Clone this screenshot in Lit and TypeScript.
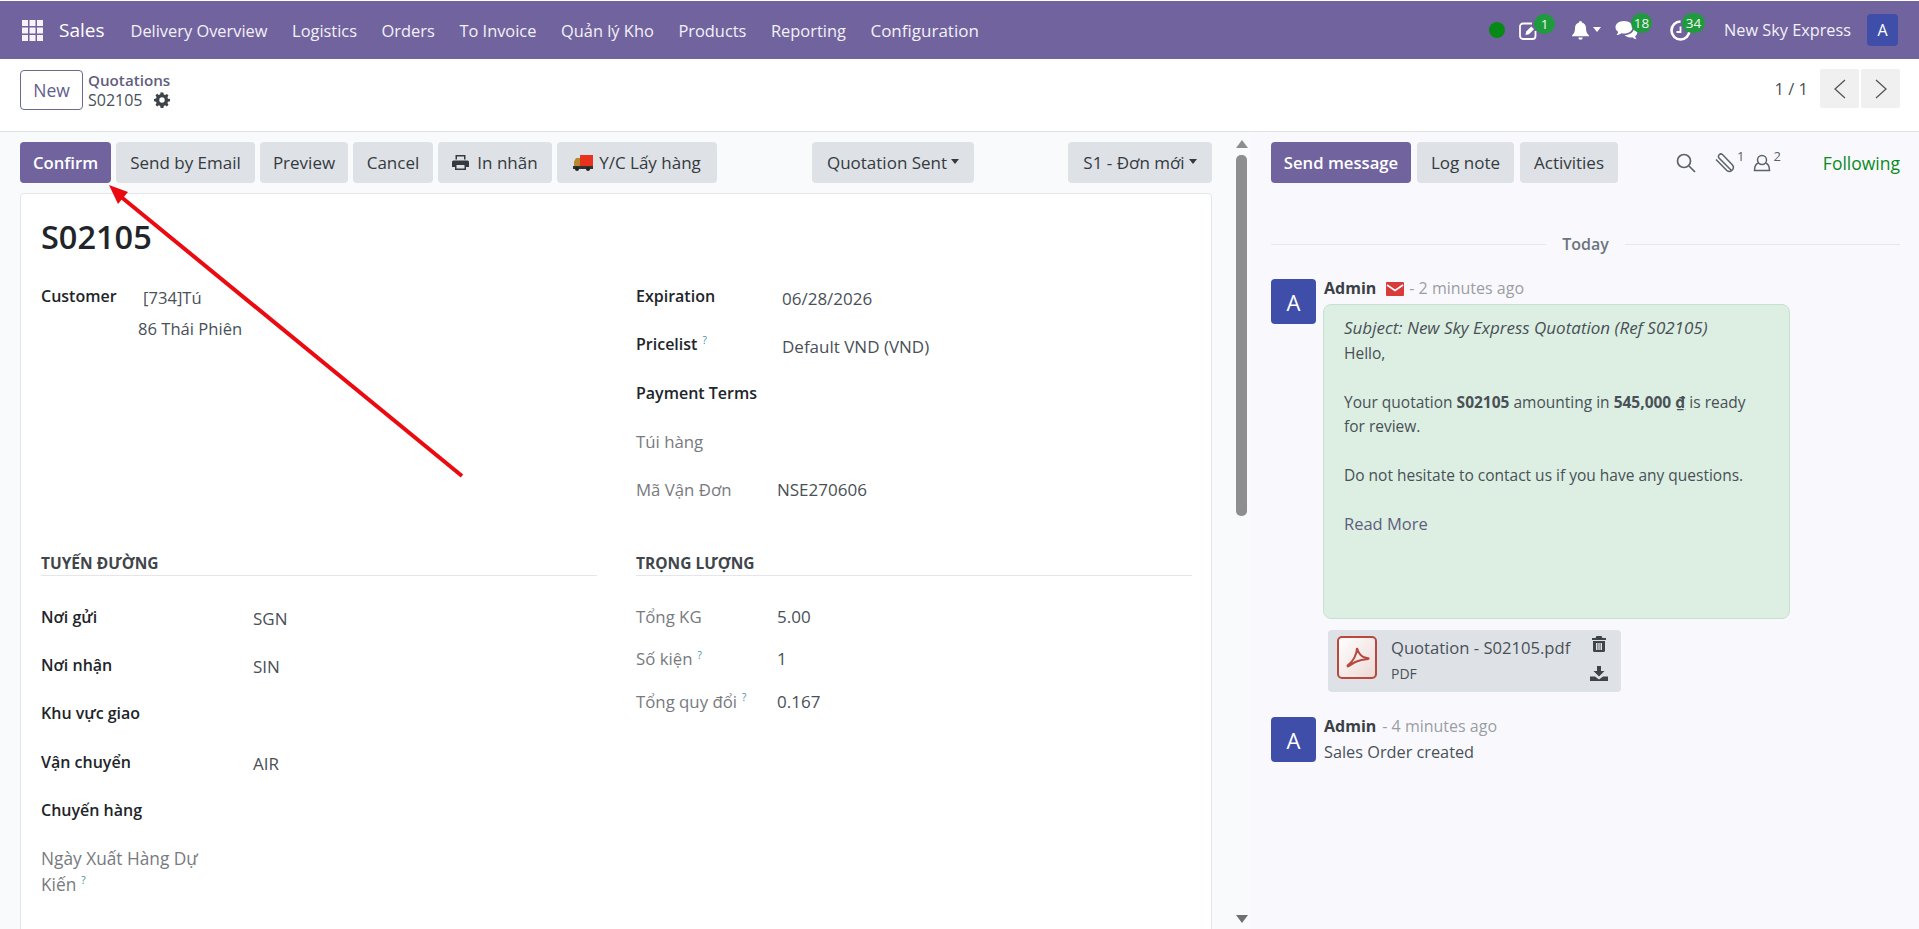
import { LitElement, html, css, svg } from "lit";
import { customElement } from "lit/decorators.js";

const gear = svg`<path fill="currentColor" d="M8 0.5l1.4 0 .4 2 1.4.6 1.7-1.1 1.6 1.6-1.1 1.7.6 1.4 2 .4v2.2l-2 .4-.6 1.4 1.1 1.7-1.6 1.6-1.7-1.1-1.4.6-.4 2H6.600l-.4-2-1.4-.6-1.7 1.1-1.6-1.600 1.1-1.700-.6-1.400-2-.4V6.900l2-.4.6-1.400-1.100-1.700 1.600-1.600 1.700 1.100 1.400-.6.4-2zM8 5.300a2.700 2.700 0 1 0 0 5.400 2.700 2.700 0 0 0 0-5.400z"/>`;

@customElement("app-root")
export class AppRoot extends LitElement {
  static styles = css`
    :host {
      display: block;
      position: relative;
      height: 929px;
      overflow: hidden;
      background: #fff;
      font-family: "Open Sans", "Noto Sans", sans-serif;
      font-size: 16px;
      color: #495057;
    }
    svg {
      display: block;
    }
    .nav {
      display: flex;
      align-items: center;
      height: 58px;
      margin-top: 1px;
      padding: 0 21px 0 22px;
      background: #71639e;
      color: #fff;
    }
    .apps {
      width: 21px;
      height: 21px;
      margin-right: 16px;
      color: #f6f4fa;
    }
    .brand {
      font-size: 19px;
      margin-right: 26px;
    }
    .nav a {
      margin-right: 24.600px;
      color: #f3f1f8;
      font-size: 16.400px;
    }
    .nav a:last-of-type {
      font-size: 17px;
    }
    .sys {
      margin-left: auto;
      display: flex;
      align-items: center;
    }
    .dot {
      width: 16px;
      height: 16px;
      border-radius: 50%;
      background: #078a15;
      margin-right: 14px;
    }
    .sysicon {
      position: relative;
      color: #fff;
    }
    .badge {
      position: absolute;
      top: -7px;
      min-width: 21px;
      height: 20px;
      box-sizing: border-box;
      border-radius: 10px;
      background: #1e9b3d;
      color: #f2f8ee;
      font-size: 13.500px;
      font-weight: 500;
      line-height: 20px;
      text-align: center;
    }
    .user {
      margin-left: 33px;
      color: #f3f1f8;
      font-size: 16.300px;
    }
    .avatar-top {
      width: 31px;
      height: 32px;
      margin-left: 16px;
      border-radius: 4px;
      background: #3f4ea8;
      color: #fff;
      display: flex;
      align-items: center;
      justify-content: center;
    }
    .cp {
      display: flex;
      align-items: center;
      height: 72px;
      padding: 0 19px 0 20px;
      border-bottom: 1px solid #dee2e6;
    }
    .new {
      box-sizing: border-box;
      width: 63px;
      height: 40px;
      border: 1px solid #6b6a92;
      border-radius: 4px;
      color: #5f5e8c;
      font-size: 17.500px;
      display: flex;
      align-items: center;
      justify-content: center;
      margin-right: 5px;
      margin-bottom: 10px;
    }
    .crumb {
      line-height: 20px;
      margin-bottom: 11px;
    }
    .crumb .top {
      font-size: 15.200px;
      font-weight: 600;
      color: #5f5e7e;
    }
    .crumb .cur {
      display: flex;
      align-items: center;
      gap: 11px;
    }
    .gear {
      width: 16px;
      height: 16px;
      color: #3f444a;
    }
    .pager {
      margin-left: auto;
      display: flex;
      align-items: center;
      margin-bottom: 13px;
    }
    .pager span {
      margin-right: 10px;
      font-size: 16.500px;
    }
    .pager b {
      display: flex;
      align-items: center;
      justify-content: center;
      width: 39px;
      height: 39px;
      margin-left: 2px;
      background: #f0f0f0;
      border-radius: 2px;
      color: #555;
    }
    .main {
      display: flex;
      height: 797px;
      background: #f9fafc;
    }
    .formpane {
      width: 1192px;
      padding: 10px 0 0 20px;
      flex: none;
    }
    .bar {
      display: flex;
      align-items: center;
      height: 41px;
      gap: 5px;
    }
    .btn {
      display: flex;
      align-items: center;
      justify-content: center;
      height: 41px;
      box-sizing: border-box;
      border-radius: 4px;
      background: #dee2e6;
      color: #343a40;
      font-size: 17px;
      font-weight: 500;
      white-space: nowrap;
      flex: none;
    }
    .primary {
      background: #71639e;
      color: #fff;
      font-size: 16.700px;
      font-weight: 600;
    }
    .caret {
      display: inline-block;
      margin-left: 4px;
      border-top: 5px solid currentColor;
      border-left: 4.500px solid transparent;
      border-right: 4.500px solid transparent;
      transform: translateY(-1px);
    }
    .scroll {
      width: 39px;
      flex: none;
      display: flex;
      flex-direction: column;
      align-items: center;
      padding: 8px 0 0 20px;
      box-sizing: border-box;
      position: relative;
    }
    .arrow-up {
      border-bottom: 8px solid #8e8e8e;
      border-left: 6px solid transparent;
      border-right: 6px solid transparent;
    }
    .thumb {
      width: 11px;
      height: 361px;
      margin-top: 7px;
      border-radius: 5px;
      background: #8e8e8e;
    }
    .arrow-down {
      position: absolute;
      top: 783px;
      border-top: 8px solid #6f6f6f;
      border-left: 6px solid transparent;
      border-right: 6px solid transparent;
    }
    .sheet {
      box-sizing: border-box;
      margin-top: 10px;
      height: 800px;
      border: 1px solid #e4e6ea;
      border-radius: 4px;
      background: #fff;
      padding: 21px 19px 0 20px;
    }
    h1 {
      margin: 0 0 13px;
      height: 44px;
      font-size: 32.500px;
      line-height: 44px;
      font-weight: 600;
      color: #212529;
    }
    .cols {
      display: grid;
      grid-template-columns: 556px 556px;
      column-gap: 39px;
    }
    .row {
      display: grid;
      align-items: center;
      height: 48.300px;
      white-space: nowrap;
    }
    .l {
      grid-template-columns: 212px 1fr;
    }
    .r {
      grid-template-columns: 146px 1fr;
    }
    .r2 {
      grid-template-columns: 141px 1fr;
    }
    .tight {
      height: 42.300px;
    }
    .lab {
      font-weight: 600;
      color: #212529;
    }
    .muted {
      font-size: 16.800px;
      font-weight: 500;
      color: #777a7e;
    }
    .val {
      font-size: 17px;
      transform: translateY(2px);
    }
    .r2 .val {
      transform: none;
    }
    .lab sup,
    .muted sup {
      font-size: 10px;
      font-weight: 500;
      color: #3d8ea5;
      margin-left: 5px;
      line-height: 0;
    }
    .cust {
      display: grid;
      grid-template-columns: 97px 1fr;
      align-items: start;
      padding-top: 10px;
      font-size: 16.600px;
      line-height: 31px;
    }
    .cust .lab {
      font-size: 16px;
      line-height: 28px;
    }
    .cust .name {
      padding-left: 5px;
    }
    .sect {
      height: 26px;
      margin-top: 36px;
      margin-bottom: 16px;
      border-bottom: 1px solid #e4e6ea;
      font-size: 15.500px;
      font-weight: 700;
      color: #40464c;
      line-height: 28px;
    }
    .r-sect {
      margin-bottom: 19px;
    }
    .two {
      height: 60px;
      align-items: start;
      padding-top: 12px;
    }
    .two .muted {
      white-space: normal;
      font-size: 17.300px;
      line-height: 26px;
      width: 172px;
    }
    .chatter {
      flex: 1;
      padding: 10px 19px 0 20px;
      background: #f9f9fd;
    }
    .tools {
      display: flex;
      align-items: center;
      gap: 5px;
      height: 41px;
    }
    .ic {
      color: #5c6268;
    }
    .sups {
      margin-left: auto;
      display: flex;
      align-items: center;
    }
    .sups sup {
      font-size: 13px;
      line-height: 0;
      margin-left: 2px;
      transform: translateY(-7px);
    }
    .follow {
      margin-left: 37px;
      color: #0a8a1e;
      font-size: 17.500px;
      font-weight: 500;
    }
    .today {
      display: flex;
      align-items: center;
      gap: 16px;
      margin-top: 50px;
      height: 22px;
      font-weight: 600;
      color: #6c757d;
    }
    .today i {
      flex: 1;
      height: 1px;
      background: #e6e8ec;
    }
    .msg {
      display: flex;
      gap: 8px;
    }
    .first {
      margin-top: 24px;
    }
    .second {
      margin-top: 25px;
    }
    .ava {
      width: 45px;
      height: 45px;
      flex: none;
      border-radius: 4px;
      background: #3f4ea8;
      color: #fff;
      font-size: 22px;
      display: flex;
      align-items: center;
      justify-content: center;
    }
    .head {
      display: flex;
      align-items: center;
      height: 19px;
      line-height: 19px;
      white-space: nowrap;
    }
    .head strong {
      font-weight: 700;
      color: #3a4046;
    }
    .head em {
      font-style: normal;
      color: #9a9ea3;
      font-size: 16px;
      margin-left: 6px;
    }
    .mail {
      margin-left: 10px;
      margin-right: -1px;
    }
    .bubble {
      box-sizing: border-box;
      width: 467px;
      height: 315px;
      margin-top: 6px;
      margin-left: -1px;
      padding: 11px 30px 0 20px;
      background: #dcefe2;
      border: 1px solid #c6e2cf;
      border-radius: 8px;
      font-size: 15.500px;
      line-height: 24.500px;
      color: #495057;
    }
    .bubble p {
      margin: 0 0 24.500px;
    }
    .subj {
      font-style: italic;
      font-size: 17px;
      white-space: nowrap;
      color: #495057;
    }
    .bubble b {
      font-weight: 700;
    }
    .bubble u {
      font-weight: 700;
    }
    .more {
      font-size: 16.500px;
      color: #5f5e7e;
    }
    .att {
      display: flex;
      box-sizing: border-box;
      width: 293px;
      height: 62px;
      margin: 11px 0 0 4px;
      padding: 6px 13px 0 9px;
      border-radius: 4px;
      background: #dee2e6;
    }
    .att .nm {
      margin-left: 14px;
      font-size: 16.600px;
      line-height: 26px;
      margin-top: -1px;
      white-space: nowrap;
      flex: 1;
    }
    .att small {
      display: block;
      font-size: 14px;
      line-height: 26px;
    }
    .att .acts {
      display: flex;
      flex-direction: column;
      align-items: center;
      gap: 14px;
      color: #3f444a;
    }
    .sales {
      margin-top: 5px;
      font-size: 16.300px;
    }
    .overlay {
      position: absolute;
      left: 0;
      top: 0;
      pointer-events: none;
    }
  `;

  field(label: string, value: string, cls: string, muted = false, help = false) {
    return html`<div class="row ${cls}">
      <div class="${muted ? "muted" : "lab"}">${label}${help ? html`<sup>?</sup>` : ""}</div>
      <div class="val">${value}</div>
    </div>`;
  }

  render() {
    return html`
      <div class="nav">
        <svg class="apps" viewBox="0 0 21 21" fill="currentColor">
          <path d="M0 0h6v6H0zM7.500 0h6v6h-6zM15 0h6v6h-6zM0 7.500h6v6H0zM7.500 7.500h6v6h-6zM15 7.500h6v6h-6zM0 15h6v6H0zM7.500 15h6v6h-6zM15 15h6v6h-6z"/>
        </svg>
        <span class="brand">Sales</span>
        <a>Delivery Overview</a>
        <a>Logistics</a>
        <a>Orders</a>
        <a>To Invoice</a>
        <a>Quản lý Kho</a>
        <a>Products</a>
        <a>Reporting</a>
        <a>Configuration</a>
        <div class="sys">
          <div class="dot"></div>
          <div class="sysicon" style="margin-right:34px">
            <svg width="19" height="19" viewBox="0 0 19 19" fill="none" stroke="currentColor" stroke-width="1.800">
              <path d="M16.500 10v5a3 3 0 0 1-3 3H4a3 3 0 0 1-3-3V5.500a3 3 0 0 1 3-3h9"/>
              <path fill="currentColor" stroke="none" d="M6.500 14l.7-3.500 5-5 2.800 2.800-5 5z"/>
            </svg>
            <span class="badge" style="left:15px">1</span>
          </div>
          <div class="sysicon">
            <svg width="17" height="19" viewBox="0 0 17 19" fill="currentColor">
              <path d="M8.500 0a1.300 1.300 0 0 1 1.300 1.500C12.500 2 14 4.200 14 7c0 4 1 5.500 3 7.500v.8H0v-.8C2 12.500 3 11 3 7c0-2.800 1.500-5 4.200-5.500A1.300 1.300 0 0 1 8.500 0zM6.300 16.500h4.400a2.200 2.200 0 0 1-4.400 0z"/>
            </svg>
          </div>
          <span class="caret" style="margin:0 14px 0 4px"></span>
          <div class="sysicon" style="margin-right:32px">
            <svg width="23" height="21" viewBox="0 0 23 21" fill="currentColor">
              <path d="M9 1c5 0 8.500 2.800 8.500 6.300S14 13.600 9 13.600c-1 0-2-.1-2.800-.4C5 14.200 3.400 15 1.500 15c.9-1 1.500-2 1.600-3.200C1.300 10.700.5 9 .5 7.300.5 3.800 4 1 9 1z"/>
              <path d="M19 7.500c2 1 3.300 2.800 3.300 4.800 0 1.600-.8 3-2.200 4 .2 1 .8 2.300 1.600 3-1.700-.2-3.200-1-4.300-2.100-.6.200-1.300.2-2 .2-2.400 0-4.500-.9-5.700-2.300 5.200-.2 9.800-3 9.300-7.600z"/>
            </svg>
            <span class="badge" style="left:16px">18</span>
          </div>
          <div class="sysicon">
            <svg width="21" height="21" viewBox="0 0 21 21" fill="none" stroke="currentColor" stroke-width="2.600">
              <path d="M10.500 1.500a9 9 0 1 0 9 9"/>
              <path stroke-width="1.800" d="M10.500 6.500v5.500h-4"/>
            </svg>
            <span class="badge" style="left:12px;min-width:23px">34</span>
          </div>
          <span class="user">New Sky Express</span>
          <div class="avatar-top">A</div>
        </div>
      </div>

      <div class="cp">
        <div class="new">New</div>
        <div class="crumb">
          <div class="top">Quotations</div>
          <div class="cur">
            S02105
            <svg class="gear" viewBox="0 0 16 16">${gear}</svg>
          </div>
        </div>
        <div class="pager">
          <span>1 / 1</span>
          <b><svg width="12" height="20" viewBox="0 0 12 20" fill="none" stroke="currentColor" stroke-width="1.300"><path d="M11 1L1 10l10 9"/></svg></b>
          <b><svg width="12" height="20" viewBox="0 0 12 20" fill="none" stroke="currentColor" stroke-width="1.300"><path d="M1 1l10 9-10 9"/></svg></b>
        </div>
      </div>

      <div class="main">
        <div class="formpane">
          <div class="bar">
            <div class="btn primary" style="width:91px">Confirm</div>
            <div class="btn" style="width:139px">Send by Email</div>
            <div class="btn" style="width:88px">Preview</div>
            <div class="btn" style="width:80px">Cancel</div>
            <div class="btn" style="width:114px">
              <svg width="17" height="15" viewBox="0 0 17 15" fill="currentColor" style="margin-right:8px"><path d="M3.500 0h10v4.500H12V1.500H5v3H3.500zM1.500 5.500h14a1.500 1.500 0 0 1 1.500 1.500v5h-3v3H3v-3H0V7a1.500 1.500 0 0 1 1.500-1.500zM4.500 10v3.500h8V10z"/></svg>
              In nhãn
            </div>
            <div class="btn" style="width:160px">
              <svg width="20" height="16" viewBox="0 0 20 16" style="margin-right:6px">
                <rect x="7" y="0" width="13" height="12" fill="#e8321e"/>
                <path d="M1 12V6.500L3 3h4v9z" fill="#b7892e"/>
                <rect x="0" y="11" width="20" height="3" fill="#333"/>
                <circle cx="4" cy="14" r="2" fill="#222"/>
                <circle cx="15" cy="14" r="2" fill="#222"/>
              </svg>
              Y/C Lấy hàng
            </div>
            <div class="btn" style="width:162px;margin-left:90px">Quotation Sent<span class="caret"></span></div>
            <div class="btn" style="width:144px;margin-left:89px">S1 - Đơn mới<span class="caret"></span></div>
          </div>
          <div class="sheet">
            <h1>S02105</h1>
            <div class="cols">
              <div class="cust">
                <div class="lab">Customer</div>
                <div>
                  <div class="name">[734]Tú</div>
                  <div>86 Thái Phiên</div>
                </div>
              </div>
              <div>
                ${this.field("Expiration", "06/28/2026", "r")}
                ${this.field("Pricelist", "Default VND (VND)", "r", false, true)}
                ${this.field("Payment Terms", "", "r")}
                ${this.field("Túi hàng", "", "r", true)}
                ${this.field("Mã Vận Đơn", "NSE270606", "r2", true)}
              </div>
              <div>
                <div class="sect">TUYẾN ĐƯỜNG</div>
                ${this.field("Nơi gửi", "SGN", "l")}
                ${this.field("Nơi nhận", "SIN", "l")}
                ${this.field("Khu vực giao", "", "l")}
                ${this.field("Vận chuyển", "AIR", "l")}
                ${this.field("Chuyến hàng", "", "l")}
                <div class="row l two">
                  <div class="muted">Ngày Xuất Hàng Dự Kiến<sup>?</sup></div>
                </div>
              </div>
              <div>
                <div class="sect r-sect">TRỌNG LƯỢNG</div>
                ${this.field("Tổng KG", "5.00", "r2 tight", true)}
                ${this.field("Số kiện", "1", "r2 tight", true, true)}
                ${this.field("Tổng quy đổi", "0.167", "r2 tight", true, true)}
              </div>
            </div>
          </div>
        </div>
        <div class="scroll">
          <div class="arrow-up"></div>
          <div class="thumb"></div>
          <div class="arrow-down"></div>
        </div>

        <div class="chatter">
          <div class="tools">
            <div class="btn primary" style="width:140px">Send message</div>
            <div class="btn" style="width:97px;margin-left:1px">Log note</div>
            <div class="btn" style="width:98px;margin-left:1px">Activities</div>
            <div class="sups ic">
              <svg width="20" height="20" viewBox="0 0 20 20" fill="none" stroke="currentColor" stroke-width="1.700"><circle cx="8" cy="8" r="6.500"/><path d="M13 13l6 6"/></svg>
              <svg style="margin-left:17px" width="22" height="22" viewBox="0 0 22 22" fill="none" stroke="currentColor" stroke-width="1.500"><path d="M19 19L6 6a2.500 2.500 0 0 1 3.500-3.500l10 10.500a4 4 0 0 1-5.700 5.500L3 7.500"/></svg>
              <sup>1</sup>
              <svg style="margin-left:9px" width="18" height="18" viewBox="0 0 18 18" fill="none" stroke="currentColor" stroke-width="1.500"><circle cx="9" cy="6" r="4.500"/><path d="M5.500 9C2.500 10 1.500 12 1.500 16.500h15C16.500 12 15.500 10 12.500 9"/></svg>
              <sup>2</sup>
            </div>
            <div class="follow">Following</div>
          </div>
          <div class="today"><i></i>Today<i></i></div>

          <div class="msg first">
            <div class="ava">A</div>
            <div>
              <div class="head">
                <strong>Admin</strong>
                <svg class="mail" width="18" height="14" viewBox="0 0 18 14"><rect width="18" height="14" rx="1" fill="#d93a3a"/><path d="M1 3l8 5.500L17 3" fill="none" stroke="#fff" stroke-width="1.600"/></svg>
                <em>- 2 minutes ago</em>
              </div>
              <div class="bubble">
                <div class="subj">Subject: New Sky Express Quotation (Ref S02105)</div>
                <p>Hello,</p>
                <p>Your quotation <b>S02105</b> amounting in <b>545,000 <u>₫</u></b> is ready for review.</p>
                <p>Do not hesitate to contact us if you have any questions.</p>
                <div class="more">Read More</div>
              </div>
              <div class="att">
                <svg width="40" height="43" viewBox="0 0 40 43">
                  <defs><linearGradient id="pdfg" x1="0" y1="0" x2="1" y2="1"><stop offset="0" stop-color="#fff"/><stop offset="1" stop-color="#ecd9d5"/></linearGradient></defs>
                  <rect x="1" y="1" width="38" height="41" rx="4" fill="url(#pdfg)" stroke="#b9483e" stroke-width="2"/>
                  <path d="M20 12c0 6-4 14-9 17 -1 1-.5 2 1 1 4-3 8-6 19-7 1 0 1-1-1-1-5 0-9-5-10-10z" fill="none" stroke="#b9483e" stroke-width="2"/>
                </svg>
                <div class="nm">Quotation - S02105.pdf<small>PDF</small></div>
                <div class="acts">
                  <svg width="14" height="16" viewBox="0 0 14 16" fill="currentColor"><path d="M4.500 0h5l1 2H14v2H0V2h3.500zM1 5h12v9.500a1.500 1.500 0 0 1-1.500 1.500h-9A1.500 1.500 0 0 1 1 14.500zM4 7v7h1.500V7zM6.300 7v7h1.400V7zM8.500 7v7H10V7z"/></svg>
                  <svg width="18" height="15" viewBox="0 0 18 15" fill="currentColor"><path d="M7 0h4v5h3.500L9 10.500 3.500 5H7zM0 10.500h5l4 3 4-3h5V15H0z"/></svg>
                </div>
              </div>
            </div>
          </div>

          <div class="msg second">
            <div class="ava">A</div>
            <div>
              <div class="head"><strong>Admin</strong><em>- 4 minutes ago</em></div>
              <div class="sales">Sales Order created</div>
            </div>
          </div>
        </div>
      </div>

      <svg class="overlay" width="1919" height="929">
        <path d="M462 476L120 196" stroke="#ea0a10" stroke-width="4" fill="none"/>
        <path d="M109 185L128 192L118 204z" fill="#ea0a10"/>
      </svg>
    `;
  }
}
